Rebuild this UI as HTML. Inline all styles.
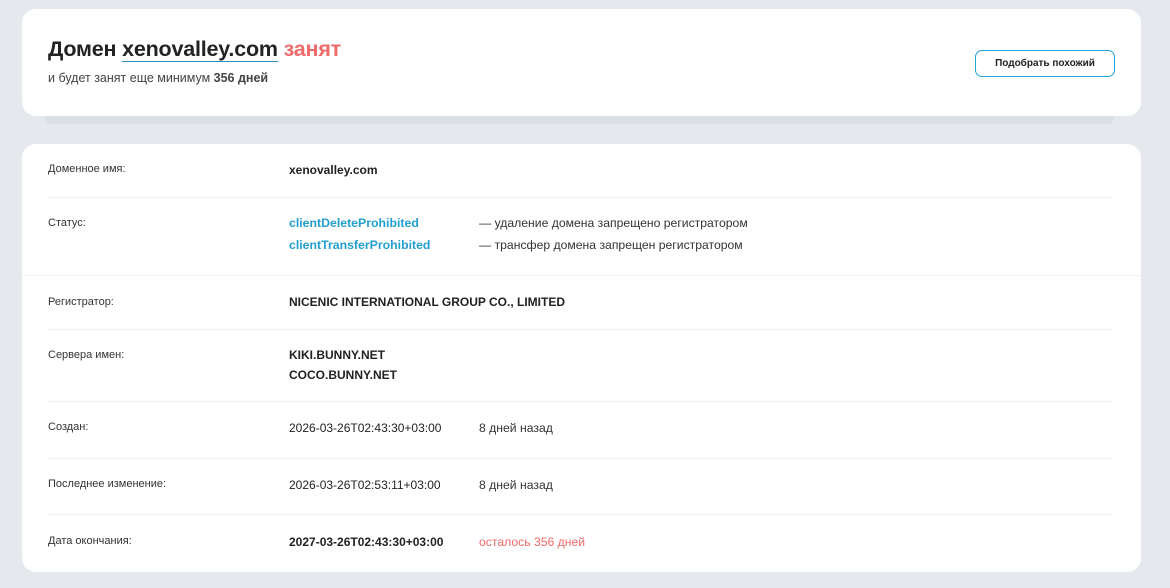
<!DOCTYPE html>
<html><head><meta charset="utf-8"><style>
*{margin:0;padding:0;box-sizing:border-box}
body{width:1170px;height:588px;background:#e5e9ee;font-family:"Liberation Sans",sans-serif;color:#222;position:relative;overflow:hidden}
.c1{position:absolute;left:22px;top:9px;width:1119px;height:107px;background:#fff;border-radius:14px}
.strip{position:absolute;left:45px;top:112px;width:1069px;height:12px;background:#dbe0e6;border-radius:0 0 6px 6px}
h1{position:absolute;left:26px;top:28px;font-size:21.5px;font-weight:bold;color:#222;letter-spacing:-0.2px}
h1 u{text-decoration:none;border-bottom:1.5px solid #2a8fc0}
h1 span{color:#f06a6a}
.sub{position:absolute;left:26px;top:62px;font-size:12.5px;color:#444}
.btn{position:absolute;left:953px;top:41px;width:140px;height:27px;border:1px solid #1ea7d8;border-radius:7px;font-size:10px;font-weight:bold;text-align:center;line-height:25px;color:#222}
.c2{position:absolute;left:22px;top:144px;width:1119px;height:428px;background:#fff;border-radius:14px}
.l{position:absolute;left:26px;font-size:11px;color:#333}
.v{position:absolute;left:267px;font-size:12px;color:#222}
.b{font-weight:bold}
.t{position:absolute;left:457px;font-size:12.2px;color:#333}
.hr{position:absolute;left:26px;width:1066px;height:1px;background:#f0f2f4}
.blue{color:#229fd0;font-weight:bold}
</style></head><body>
<div class="strip"></div>
<div class="c1">
<h1>Домен <u>xenovalley.com</u> <span>занят</span></h1>
<div class="sub">и будет занят еще минимум <b>356 дней</b></div>
<div class="btn">Подобрать похожий</div>
</div>
<div class="c2">
<div class="l" style="top:19px">Доменное имя:</div>
<div class="v b" style="top:19px">xenovalley.com</div>
<div class="hr" style="top:53px"></div>
<div class="l" style="top:73px">Статус:</div>
<div class="v blue" style="top:72px;font-size:12.3px">clientDeleteProhibited</div>
<div class="t" style="top:72px">— удаление домена запрещено регистратором</div>
<div class="v blue" style="top:94px;font-size:12.3px">clientTransferProhibited</div>
<div class="t" style="top:94px">— трансфер домена запрещен регистратором</div>
<div class="hr" style="top:131px;left:0;width:1119px"></div>
<div class="l" style="top:152px">Регистратор:</div>
<div class="v b" style="top:151px">NICENIC INTERNATIONAL GROUP CO., LIMITED</div>
<div class="hr" style="top:185px"></div>
<div class="l" style="top:205px">Сервера имен:</div>
<div class="v b" style="top:204px">KIKI.BUNNY.NET</div>
<div class="v b" style="top:224px">COCO.BUNNY.NET</div>
<div class="hr" style="top:257px"></div>
<div class="l" style="top:277px">Создан:</div>
<div class="v" style="top:277px">2026-03-26T02:43:30+03:00</div>
<div class="t" style="top:277px">8 дней назад</div>
<div class="hr" style="top:314px"></div>
<div class="l" style="top:334px">Последнее изменение:</div>
<div class="v" style="top:334px">2026-03-26T02:53:11+03:00</div>
<div class="t" style="top:334px">8 дней назад</div>
<div class="hr" style="top:370px"></div>
<div class="l" style="top:391px">Дата окончания:</div>
<div class="v b" style="top:391px">2027-03-26T02:43:30+03:00</div>
<div class="t" style="top:391px;color:#f06a6a">осталось 356 дней</div>
</div>
</body></html>
